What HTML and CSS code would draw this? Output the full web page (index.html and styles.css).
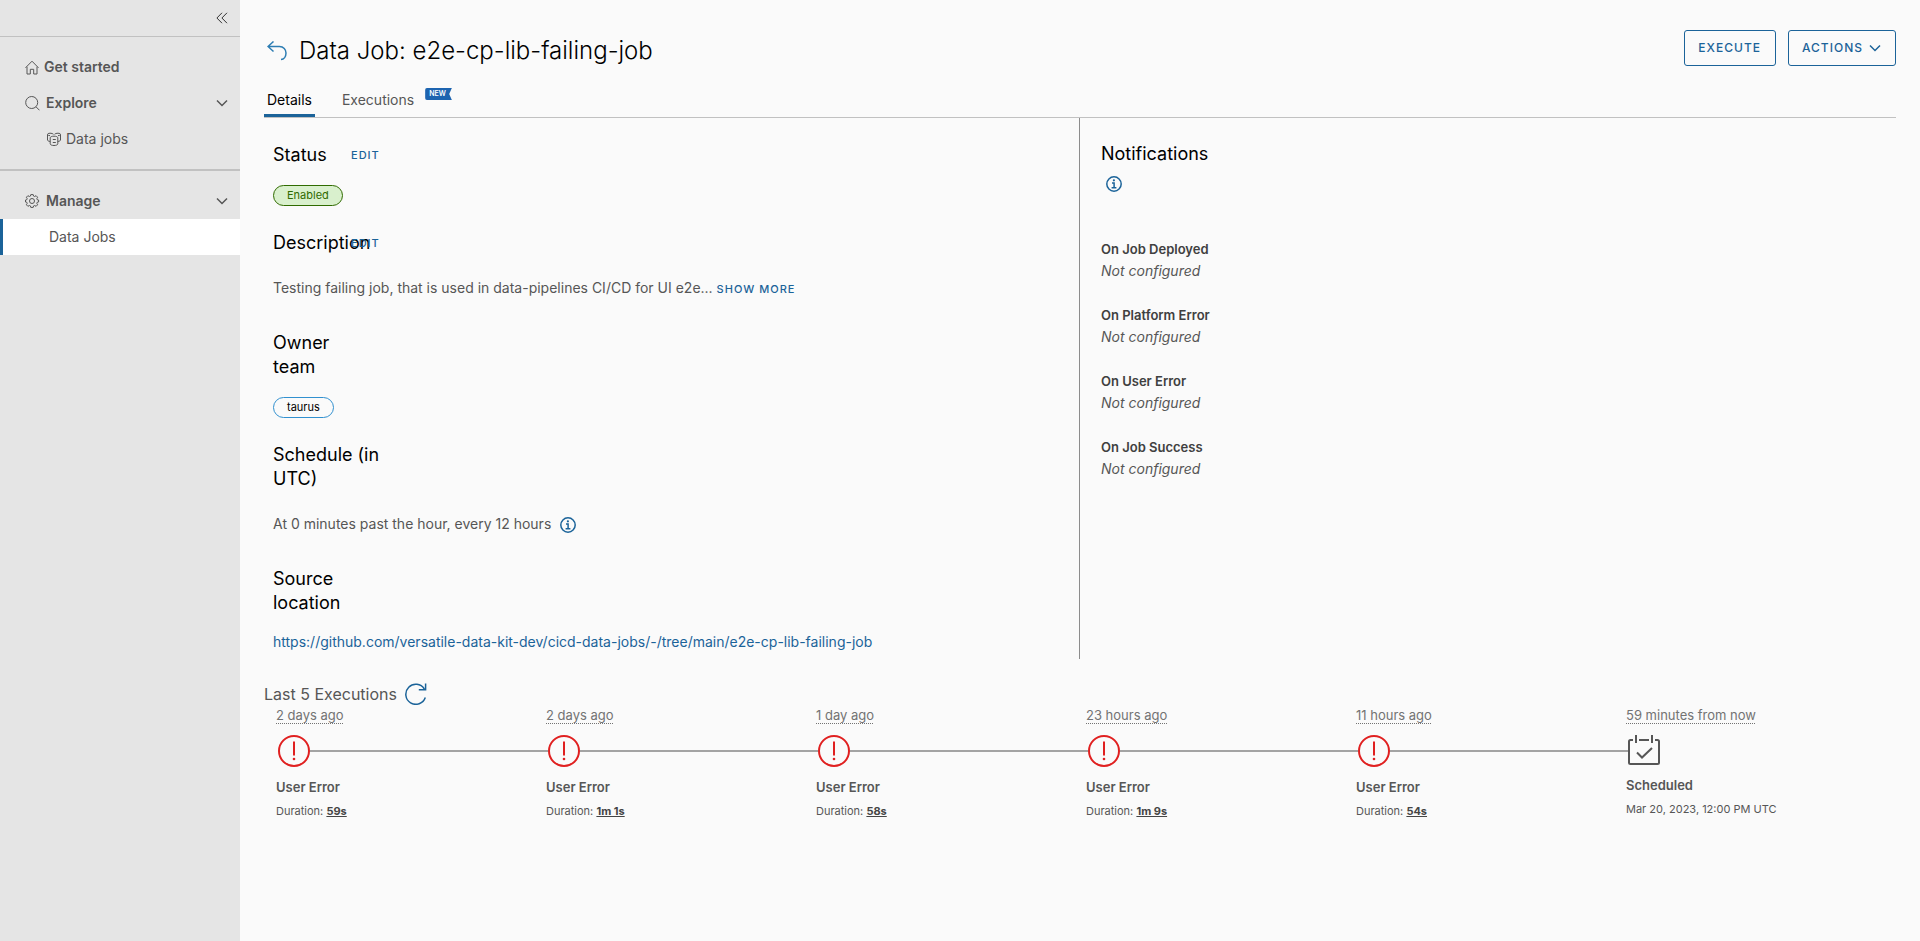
FILE: index.html
```html
<!DOCTYPE html>
<html lang="en">
<head>
<meta charset="utf-8">
<title>Data Job: e2e-cp-lib-failing-job</title>
<link rel="stylesheet" href="styles.css">
</head>
<body>
<svg class="sprite" aria-hidden="true">
  <symbol id="angle" viewBox="0 0 12 8"><path d="M1 1.5l5 5 5-5"/></symbol>
  <symbol id="info" viewBox="0 0 16 16"><circle cx="8" cy="8" r="7.2"/><path d="M6 6.900h2.100v4.600M5.600 11.700h4.800"/><circle cx="7.900" cy="4.300" r="1.100" class="dot"/></symbol>
  <symbol id="error" viewBox="0 0 32 32"><circle cx="16" cy="16" r="15"/><path d="M16 6.500v14"/><circle cx="16" cy="24" r="1.300" class="dot"/></symbol>
</svg>
<div class="app">
  <nav class="sidebar" aria-label="Main">
    <div class="sidebar-top">
      <button class="collapse" aria-label="Collapse"><svg width="12" height="12" viewBox="0 0 12 12"><path d="M6 .8L.9 6 6 11.200M11 .8L5.900 6l5.100 5.200"/></svg></button>
    </div>
    <div class="nav-group">
      <a class="nav-item strong" href="#"><svg width="14" height="16" viewBox="0 0 14 16"><path d="M.5 8.800L7 2.200l6.500 6.600M2 7.800V15h3.300v-4.700h3.400V15H12V7.800"/></svg>Get started</a>
      <button class="nav-item strong wide"><svg width="15" height="16" viewBox="0 0 15 16"><circle cx="6.700" cy="7.500" r="6"/><path d="M11 11.800l3.500 3.500"/></svg>Explore<svg class="caret" width="12" height="8"><use href="#angle"/></svg></button>
      <a class="nav-item child" href="#"><svg width="14" height="14" viewBox="0 0 14 14"><path d="M3.200 9.500C1.600 9.300.5 8.700.5 8V2.500Q.5 1.200 3 1.200T6.500 2.300M.5 2.500q.5 1 2.500 1.200M10.800 9.500c1.600-.2 2.700-.8 2.700-1.500V2.500Q13.500 1.200 11 1.200T7.500 2.300M13.500 2.500q-.5 1-2.500 1.200"/><path d="M3.200 5.800c0-1 1.600-1.600 3.800-1.600s3.800.6 3.800 1.600v6c0 1-1.600 1.700-3.800 1.700s-3.800-.7-3.800-1.700zM5.800 7.500h3M5.800 10.500h3"/></svg>Data jobs</a>
    </div>
    <div class="nav-group">
      <button class="nav-item strong wide"><svg width="15" height="14" viewBox="0 0 15 14"><circle cx="7" cy="7" r="2.500"/><path d="M5.800.6h2.400l.4 1.500 1 .4 1.500-.8 1.500 1.500-.8 1.500.4 1 1.400.3v2l-1.400.3-.4 1 .8 1.500-1.500 1.500-1.500-.8-1 .4-.4 1.500H5.800l-.4-1.500-1-.4-1.500.8-1.500-1.500.8-1.500-.4-1L.5 8V6l1.300-.3.4-1-.8-1.500 1.500-1.500 1.500.8 1-.4z"/></svg>Manage<svg class="caret" width="12" height="8"><use href="#angle"/></svg></button>
      <a class="nav-item active" href="#" aria-current="page">Data Jobs</a>
    </div>
  </nav>

  <main class="main">
    <header class="page-head">
      <a class="back" href="#" aria-label="Back"><svg width="20" height="20" viewBox="0 0 20 20"><path d="M6.500 .5L1 5.500l5.500 5M1.300 5.500h11.200c4 0 6.500 3 6.500 6.500s-2 6.300-5 6.500"/></svg></a>
      <h1>Data Job: e2e-cp-lib-failing-job</h1>
      <div class="actions">
        <button class="btn">Execute</button>
        <button class="btn">Actions<svg width="12" height="8"><use href="#angle"/></svg></button>
      </div>
    </header>
    <div class="tabs" role="tablist">
      <button class="tab selected" role="tab" aria-selected="true">Details</button>
      <button class="tab" role="tab" aria-selected="false">Executions</button>
      <span class="new">NEW</span>
    </div>

    <div class="columns">
      <div class="left">
        <section>
          <div class="head"><h2 class="fixed">Status</h2><button class="link-btn">Edit</button></div>
          <div class="tagline"><span class="tag enabled">Enabled</span></div>
        </section>
        <section>
          <div class="head"><h2 class="fixed">Description</h2><button class="link-btn">Edit</button></div>
          <p class="value">Testing failing job, that is used in data-pipelines CI/CD for UI e2e... <button class="link-btn">Show more</button></p>
        </section>
        <section>
          <h2>Owner team</h2>
          <div class="tagline"><span class="tag team">taurus</span></div>
        </section>
        <section>
          <h2>Schedule&nbsp;(in UTC)</h2>
          <p class="value schedule">At 0 minutes past the hour, every 12 hours <button class="info" aria-label="Schedule details"><svg width="16" height="16"><use href="#info"/></svg></button></p>
        </section>
        <section>
          <h2>Source location</h2>
          <p class="value source"><a href="#">https://github.com/versatile-data-kit-dev/cicd-data-jobs/-/tree/main/e2e-cp-lib-failing-job</a></p>
        </section>
      </div>
      <div class="right">
        <h2>Notifications</h2>
        <button class="info" aria-label="About notifications"><svg width="16" height="16"><use href="#info"/></svg></button>
        <dl class="notes">
          <div><dt>On Job Deployed</dt><dd>Not configured</dd></div>
          <div><dt>On Platform Error</dt><dd>Not configured</dd></div>
          <div><dt>On User Error</dt><dd>Not configured</dd></div>
          <div><dt>On Job Success</dt><dd>Not configured</dd></div>
        </dl>
      </div>
    </div>

    <section class="executions">
      <h3>Last 5 Executions <button class="refresh" aria-label="Refresh"><svg width="22" height="22" viewBox="0 0 22 22"><path d="M20.300 14.500A10 10 0 1 1 19.300 6M20.600.5v6.300h-6.800"/></svg></button></h3>
      <ol class="timeline">
        <li><span class="time">2 days ago</span><div class="mark"><svg class="err" width="32" height="32"><use href="#error"/></svg></div><b>User Error</b><small>Duration: <a href="#">59s</a></small></li>
        <li><span class="time">2 days ago</span><div class="mark"><svg class="err" width="32" height="32"><use href="#error"/></svg></div><b>User Error</b><small>Duration: <a href="#">1m 1s</a></small></li>
        <li><span class="time">1 day ago</span><div class="mark"><svg class="err" width="32" height="32"><use href="#error"/></svg></div><b>User Error</b><small>Duration: <a href="#">58s</a></small></li>
        <li><span class="time">23 hours ago</span><div class="mark"><svg class="err" width="32" height="32"><use href="#error"/></svg></div><b>User Error</b><small>Duration: <a href="#">1m 9s</a></small></li>
        <li><span class="time">11 hours ago</span><div class="mark"><svg class="err" width="32" height="32"><use href="#error"/></svg></div><b>User Error</b><small>Duration: <a href="#">54s</a></small></li>
        <li class="last"><span class="time">59 minutes from now</span><div class="mark"><svg class="cal" width="32" height="30" viewBox="0 0 32 30"><path d="M5 5H2.500Q1 5 1 6.500v21Q1 29 2.500 29h27q1.500 0 1.500-1.500v-21Q31 5 29.500 5H27M11 5h10M8 0v8M24 0v8M9 17.500l5 5L24 13"/></svg></div><b>Scheduled</b><small>Mar 20, 2023, 12:00 PM UTC</small></li>
      </ol>
    </section>
  </main>
</div>
</body>
</html>
```
FILE: styles.css
```css
* { box-sizing: border-box; }
body {
  margin: 0;
  background: #fafafa;
  color: #565656;
  font: 14px/24px Inter, "Liberation Sans", sans-serif;
}
h1, h2, h3, p, dl, dd, ol { margin: 0; padding: 0; font-weight: 400; }
h1, h2 { color: #000; }
a { color: #1b6399; text-decoration: none; }
button {
  padding: 0;
  border: 0;
  background: none;
  color: inherit;
  font: inherit;
  cursor: pointer;
}
svg { fill: none; stroke: currentColor; flex: none; }
.dot { fill: currentColor; stroke: none; }
.sprite { position: absolute; width: 0; height: 0; }
.app { display: flex; min-height: 100vh; }

/* Sidebar */
.sidebar { flex: none; width: 240px; background: #e5e5e5; }
.sidebar-top {
  display: flex;
  align-items: center;
  justify-content: flex-end;
  height: 37px;
  padding-right: 12px;
  border-bottom: 1px solid #c1c1c1;
}
.collapse { display: flex; color: #333; }
.nav-group { padding: 12px 0; }
.nav-group + .nav-group { border-top: 2px solid #c1c1c1; }
.nav-item {
  display: flex;
  align-items: center;
  gap: 5px;
  width: 100%;
  height: 36px;
  padding: 0 12px 0 25px;
  color: #565656;
  text-align: left;
}
.strong { font-weight: 600; }
.wide { gap: 6px; }
.child { padding-left: 47px; }
.caret { margin-left: auto; stroke-width: 1.5; }
.active { padding-left: 46px; border-left: 3px solid #1b6399; background: #fff; }

/* Header and tabs */
.main { flex: 1; min-width: 0; padding: 30px 24px 24px; }
.page-head { display: flex; align-items: center; height: 42px; }
.back { display: flex; padding: 0 12px 0 3px; color: #2d7db3; }
h1 { font-size: 24px; font-weight: 300; line-height: 36px; }
.back svg, .btn svg { stroke-width: 1.5; }
.actions { display: flex; gap: 12px; align-self: flex-start; margin-left: auto; }
.btn {
  display: flex;
  align-items: center;
  gap: 6px;
  height: 36px;
  padding: 0 14px 0 13px;
  border: 1px solid #1b6399;
  border-radius: 3px;
  color: #1b6399;
  font-size: 12px;
  font-weight: 500;
  letter-spacing: 1px;
  text-transform: uppercase;
}
.tabs { display: flex; padding-top: 10px; border-bottom: 1px solid #c1c1c1; }
.tab { height: 35px; margin-right: 24px; padding: 0 3px; }
.selected { color: #000; box-shadow: inset 0 -3px #1b6399; }
.new {
  align-self: flex-start;
  margin: 6px 0 0 -16px;
  padding: 0 6px 0 4px;
  border-radius: 2px 0 0 2px;
  background: #1d64b0;
  clip-path: polygon(0 0, 100% 0, 90% 50%, 100% 100%, 0 100%);
  color: #fff;
  font-size: 7px;
  font-weight: 600;
  line-height: 12px;
}

/* Details */
.columns { display: grid; grid-template-columns: 1fr 1fr; }
.left { padding: 25px 9px 5px; border-right: 1px solid #8c8c8c; }
.right { padding: 24px 21px; }
h2 { width: min-content; font-size: 18px; line-height: 24px; }
.head { display: flex; align-items: center; }
.fixed { width: 78px; }
.link-btn {
  color: #1b6399;
  font-size: 11px;
  font-weight: 500;
  letter-spacing: 1px;
  text-transform: uppercase;
}
.tagline { display: flex; padding: 18px 0 25px; }
.tag {
  padding: 0 13px;
  border: 1px solid;
  border-radius: 11px;
  font-size: 11px;
  line-height: 19px;
}
.enabled { border-color: #306b00; background: #d9f0cd; color: #306b00; }
.team { border-color: #3190cf; color: #000; }
.value { padding: 21px 0 30px; }
.schedule { padding-bottom: 31px; }
.source { padding: 15px 0 0; }
.info { display: inline-flex; vertical-align: middle; margin-left: 5px; color: #1b6399; }
.info svg { stroke-width: 1.5; }
.right .info { display: flex; margin-top: 10px; }
.notes { display: grid; gap: 22px; padding-top: 46px; line-height: 22px; }
.notes dt { color: #404040; font-size: 13px; font-weight: 600; }
.notes dd { font-style: italic; }

/* Executions */
.executions { padding-top: 23px; }
h3 { display: flex; align-items: center; gap: 8px; font-size: 16px; line-height: 24px; }
.refresh { display: flex; color: #1b6399; }
.refresh svg { stroke-width: 1.5; }
.timeline {
  display: grid;
  grid-template-columns: repeat(6, 1fr);
  padding-left: 12px;
  list-style: none;
}
.timeline li { display: flex; flex-direction: column; align-items: flex-start; }
.time {
  color: #737373;
  font-size: 13px;
  line-height: 18px;
  text-decoration: underline dotted 1px;
  text-underline-offset: 3px;
}
.mark { display: flex; align-items: center; width: 100%; margin: 11px 0 8px; padding-left: 2px; }
.mark::after { content: ""; flex: 1; height: 2px; margin-right: -2px; background: #a3a3a3; }
.last .mark::after { display: none; }
.err { color: #e02020; stroke-width: 2; }
.cal { stroke-width: 2; }
.timeline b { font-size: 13px; font-weight: 600; }
.timeline small { font-size: 11px; }
.timeline small a { color: #454545; font-weight: 700; text-decoration: underline; }
```
